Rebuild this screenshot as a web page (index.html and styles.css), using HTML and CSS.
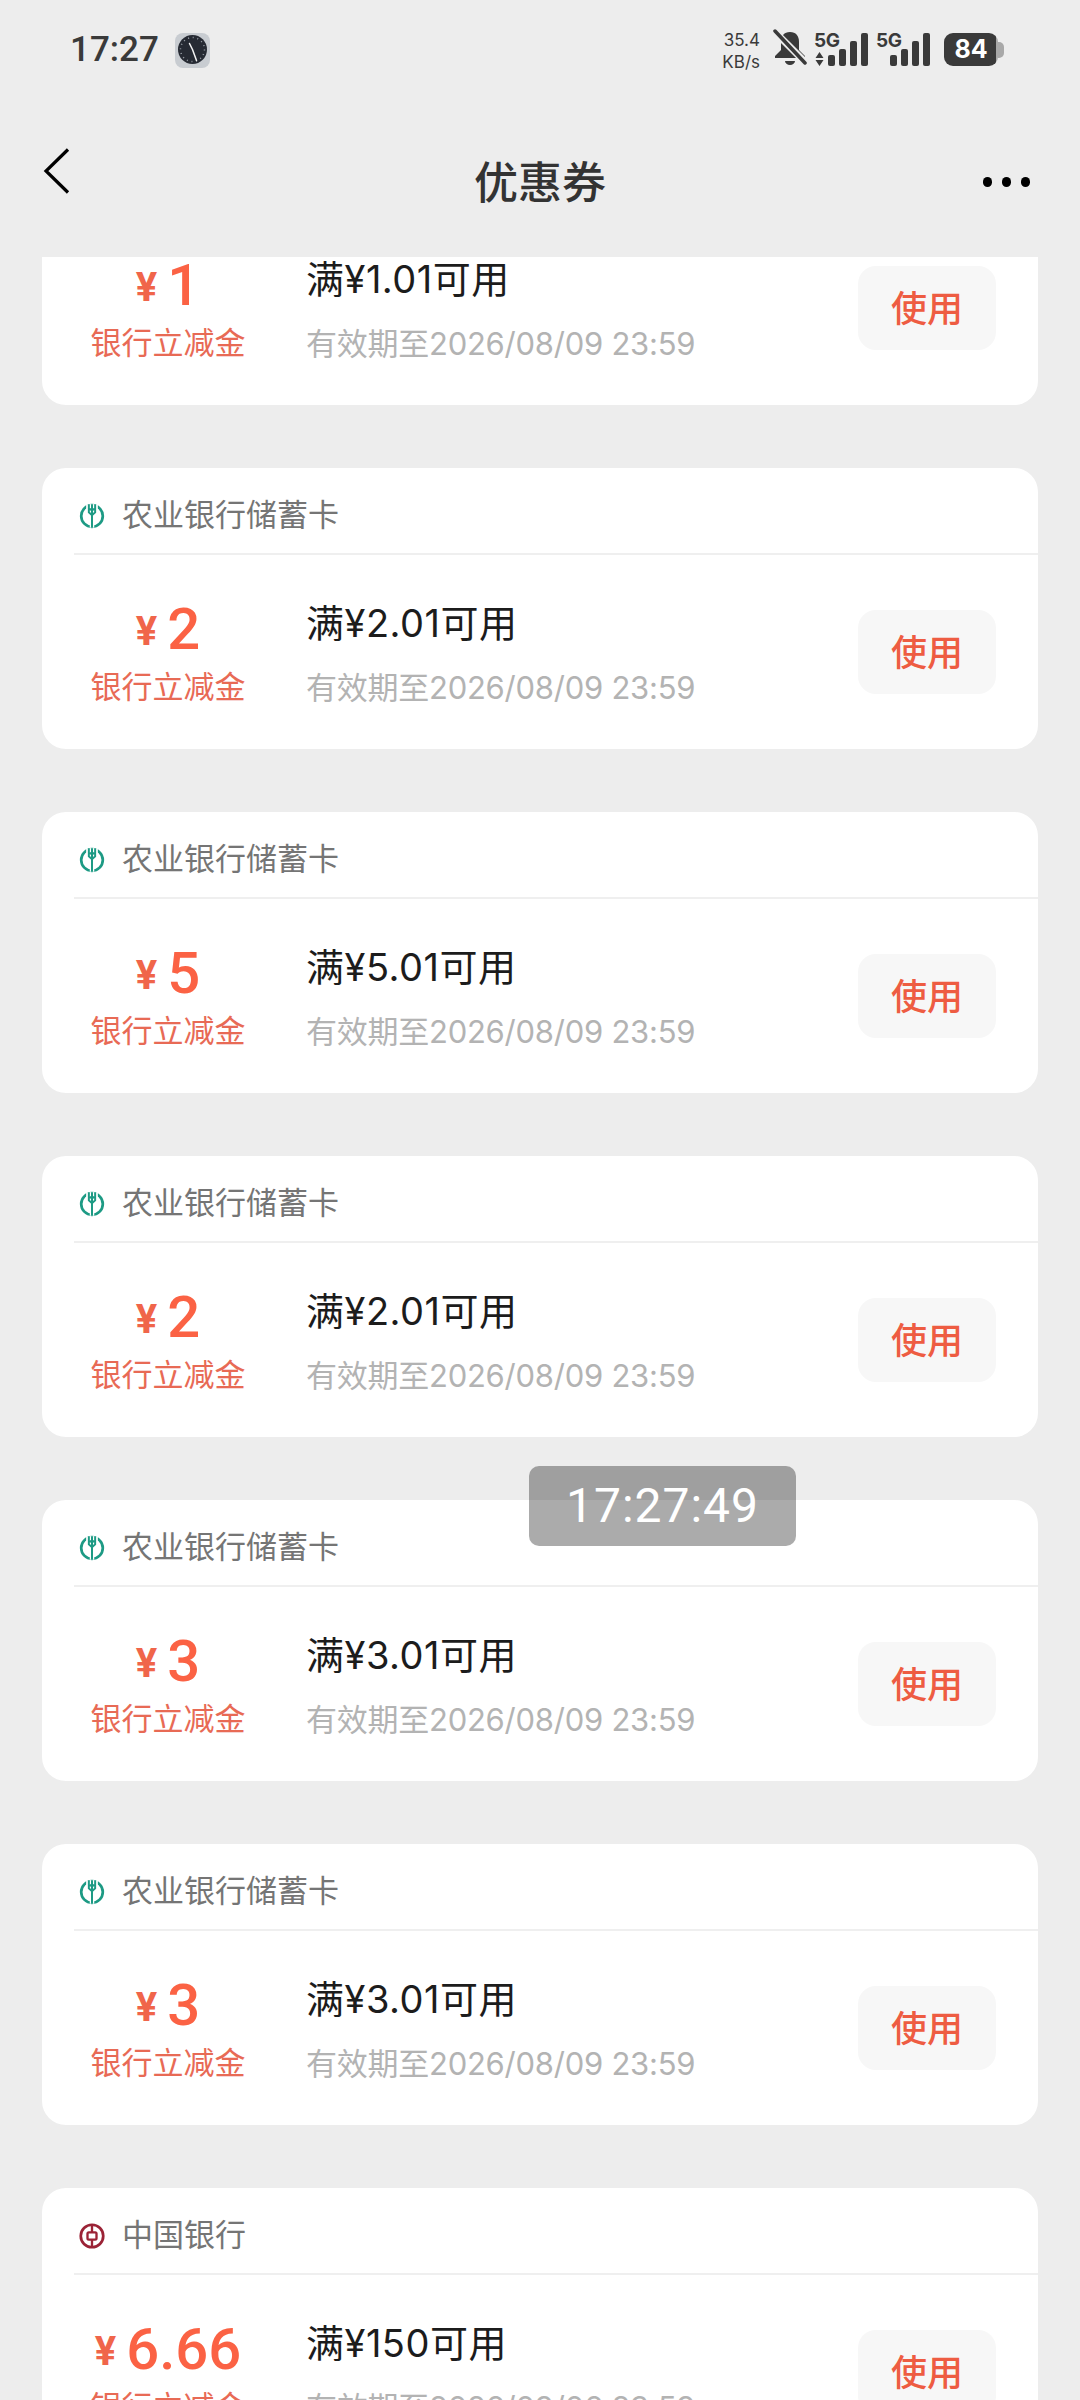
FILE: index.html
```html
<!DOCTYPE html>
<html lang="zh-CN">
<head>
    <meta charset="UTF-8">
    <meta name="viewport" content="width=device-width, initial-scale=1.0">
    <title>优惠券</title>
    <link rel="stylesheet" href="styles.css">
</head>
<body>
<svg class="defs" width="0" height="0">
    <symbol id="abc" viewBox="0 0 40 40">
        <circle cx="20" cy="20" r="19.500" fill="#fff"/>
        <circle cx="20" cy="20" r="12" fill="none" stroke="#1d9a84" stroke-width="3"/>
        <path d="M16 7v9l4 3.500 4-3.500V7" fill="none" stroke="#fff" stroke-width="5"/>
        <path d="M20 7v26" stroke="#fff" stroke-width="5"/>
        <path d="M16.500 7v9l3.500 3 3.500-3V7M20 7v26M17.500 12l2.500 2 2.500-2" fill="none" stroke="#1d9a84" stroke-width="2.200"/>
    </symbol>
    <symbol id="boc" viewBox="0 0 40 40">
        <circle cx="20" cy="20" r="19.500" fill="#fff"/>
        <circle cx="20" cy="20" r="12.500" fill="none" stroke="#9b2336" stroke-width="3"/>
        <rect x="15" y="16" width="10" height="8" rx="1.500" fill="none" stroke="#9b2336" stroke-width="2.600"/>
        <path d="M20 7v9M20 24v9" stroke="#9b2336" stroke-width="2.600"/>
    </symbol>
</svg>

<div class="phone">
    <div class="top">
        <div class="status">
            <div class="status-left">
                <span class="clock-text">17:27</span>
                <svg class="clock-icon" width="35" height="35" viewBox="0 0 35 35">
                    <rect width="35" height="35" rx="8" fill="#c8ccd1"/>
                    <circle cx="17.500" cy="16.500" r="14.500" fill="#262a33"/>
                    <circle cx="17.500" cy="16.500" r="12" fill="none" stroke="#9aa0a8" stroke-width="1.500" stroke-dasharray="1 3.700"/>
                    <path d="M17.500 16.500l4 11M17.500 16.500l-3-6" stroke="#f2f2f2" stroke-width="1.500" stroke-linecap="round"/>
                </svg>
            </div>
            <div class="status-right">
                <div class="netspeed"><span>35.4</span><span>KB/s</span></div>
                <svg class="bell" width="34" height="38" viewBox="0 0 34 38">
                    <path d="M17 3c-6 0-9 4-9 10v8l-6 6v2h30v-2l-6-6v-8c0-6-3-10-9-10zM12 32h10a5 4 0 0 1-10 0z" fill="#3a3a3a"/>
                    <path d="M1 2l32 32" stroke="#ededed" stroke-width="7"/>
                    <path d="M2 2l30 32" stroke="#3a3a3a" stroke-width="3.500" stroke-linecap="round"/>
                </svg>
                <div class="signal signal-first">
                    <div class="signal-left">
                        <span class="fiveg">5G</span>
                        <svg class="arrows" width="9" height="14" viewBox="0 0 9 14"><path d="M4.500 0l4 6H.5zM4.500 14l4-6H.5z" fill="#3a3a3a"/></svg>
                    </div>
                    <div class="bars">
                        <i class="bar bar1"></i><i class="bar bar2"></i><i class="bar bar3"></i><i class="bar bar4"></i>
                    </div>
                </div>
                <div class="signal signal-second">
                    <div class="signal-left">
                        <span class="fiveg">5G</span>
                    </div>
                    <div class="bars">
                        <i class="bar bar1"></i><i class="bar bar2"></i><i class="bar bar3"></i><i class="bar bar4"></i>
                    </div>
                </div>
                <div class="battery"><span class="battery-body">84</span><i class="battery-nub"></i></div>
            </div>
        </div>
        <div class="nav">
            <svg class="back" width="28" height="48" viewBox="0 0 28 48">
                <path d="M25 2.500L3 24l22 21.500" fill="none" stroke="#000" stroke-width="3.200"/>
            </svg>
            <div class="nav-title">优惠券</div>
            <div class="more"><i></i><i></i><i></i></div>
        </div>
    </div>

    <div class="list">
        <div class="card card-first">
            <div class="card-head">
                <svg class="bank-icon" viewBox="0 0 40 40"><use href="#abc"/></svg>
                <span class="bank-name">农业银行储蓄卡</span>
            </div>
            <div class="card-body">
                <div class="amount-col">
                    <div class="amount"><span class="yen">¥</span><span class="num">1</span></div>
                    <div class="amount-label">银行立减金</div>
                </div>
                <div class="info">
                    <div class="info-title">满¥1.01可用</div>
                    <div class="info-date">有效期至2026/08/09 23:59</div>
                </div>
                <div class="use-btn">使用</div>
            </div>
        </div>

        <div class="card">
            <div class="card-head">
                <svg class="bank-icon" viewBox="0 0 40 40"><use href="#abc"/></svg>
                <span class="bank-name">农业银行储蓄卡</span>
            </div>
            <div class="card-body">
                <div class="amount-col">
                    <div class="amount"><span class="yen">¥</span><span class="num">2</span></div>
                    <div class="amount-label">银行立减金</div>
                </div>
                <div class="info">
                    <div class="info-title">满¥2.01可用</div>
                    <div class="info-date">有效期至2026/08/09 23:59</div>
                </div>
                <div class="use-btn">使用</div>
            </div>
        </div>

        <div class="card">
            <div class="card-head">
                <svg class="bank-icon" viewBox="0 0 40 40"><use href="#abc"/></svg>
                <span class="bank-name">农业银行储蓄卡</span>
            </div>
            <div class="card-body">
                <div class="amount-col">
                    <div class="amount"><span class="yen">¥</span><span class="num">5</span></div>
                    <div class="amount-label">银行立减金</div>
                </div>
                <div class="info">
                    <div class="info-title">满¥5.01可用</div>
                    <div class="info-date">有效期至2026/08/09 23:59</div>
                </div>
                <div class="use-btn">使用</div>
            </div>
        </div>

        <div class="card">
            <div class="card-head">
                <svg class="bank-icon" viewBox="0 0 40 40"><use href="#abc"/></svg>
                <span class="bank-name">农业银行储蓄卡</span>
            </div>
            <div class="card-body">
                <div class="amount-col">
                    <div class="amount"><span class="yen">¥</span><span class="num">2</span></div>
                    <div class="amount-label">银行立减金</div>
                </div>
                <div class="info">
                    <div class="info-title">满¥2.01可用</div>
                    <div class="info-date">有效期至2026/08/09 23:59</div>
                </div>
                <div class="use-btn">使用</div>
            </div>
        </div>

        <div class="card">
            <div class="card-head">
                <svg class="bank-icon" viewBox="0 0 40 40"><use href="#abc"/></svg>
                <span class="bank-name">农业银行储蓄卡</span>
            </div>
            <div class="card-body">
                <div class="amount-col">
                    <div class="amount"><span class="yen">¥</span><span class="num">3</span></div>
                    <div class="amount-label">银行立减金</div>
                </div>
                <div class="info">
                    <div class="info-title">满¥3.01可用</div>
                    <div class="info-date">有效期至2026/08/09 23:59</div>
                </div>
                <div class="use-btn">使用</div>
            </div>
        </div>

        <div class="card">
            <div class="card-head">
                <svg class="bank-icon" viewBox="0 0 40 40"><use href="#abc"/></svg>
                <span class="bank-name">农业银行储蓄卡</span>
            </div>
            <div class="card-body">
                <div class="amount-col">
                    <div class="amount"><span class="yen">¥</span><span class="num">3</span></div>
                    <div class="amount-label">银行立减金</div>
                </div>
                <div class="info">
                    <div class="info-title">满¥3.01可用</div>
                    <div class="info-date">有效期至2026/08/09 23:59</div>
                </div>
                <div class="use-btn">使用</div>
            </div>
        </div>

        <div class="card">
            <div class="card-head">
                <svg class="bank-icon" viewBox="0 0 40 40"><use href="#boc"/></svg>
                <span class="bank-name">中国银行</span>
            </div>
            <div class="card-body">
                <div class="amount-col">
                    <div class="amount"><span class="yen">¥</span><span class="num">6.66</span></div>
                    <div class="amount-label">银行立减金</div>
                </div>
                <div class="info">
                    <div class="info-title">满¥150可用</div>
                    <div class="info-date">有效期至2026/09/06 23:59</div>
                </div>
                <div class="use-btn">使用</div>
            </div>
        </div>
    </div>

    <div class="time-toast">17:27:49</div>
</div>
</body>
</html>
```

FILE: styles.css
```css
* {
    box-sizing: border-box;
}
html, body {
    margin: 0;
    padding: 0;
}
body {
    font-family: Roboto, "Noto Sans CJK SC", sans-serif;
    background-color: #ededed;
}
.defs {
    position: absolute;
}
.phone {
    position: relative;
    width: 1080px;
    height: 2400px;
    overflow: hidden;
    display: flex;
    flex-direction: column;
}

/* status bar and title */
.top {
    height: 257px;
    flex-shrink: 0;
    background-color: #ededed;
}
.status {
    height: 100px;
    display: flex;
    justify-content: space-between;
    padding: 29px 76px 0 70px;
    color: #3a3a3a;
}
.status-left {
    display: flex;
    align-items: flex-start;
    gap: 15px;
}
.clock-text {
    width: 90px;
    font-size: 35px;
    font-weight: 500;
    line-height: 42px;
}
.clock-icon {
    margin-top: 4px;
}
.status-right {
    display: flex;
    align-items: flex-start;
}
.netspeed {
    display: flex;
    flex-direction: column;
    align-items: flex-end;
    width: 37px;
    font-size: 17px;
    line-height: 22px;
    font-family: Inter, sans-serif;
    margin-right: 13px;
    white-space: nowrap;
}
.bell {
    margin-right: 7px;
}
.signal {
    display: flex;
    height: 38px;
    margin-top: 2px;
}
.signal-left {
    display: flex;
    flex-direction: column;
}
.signal-first {
    width: 55px;
    margin-right: 7px;
}
.signal-second {
    width: 55px;
    margin-right: 13px;
}
.fiveg {
    font-family: Inter, sans-serif;
    font-size: 19px;
    font-weight: 700;
    line-height: 19px;
    width: 26px;
    letter-spacing: -0.5px;
}
.arrows {
    margin: 2px 0 0 1px;
}
.bars {
    display: flex;
    align-items: flex-end;
    gap: 4px;
    height: 33px;
    margin: 2px 0 0 -12px;
}
.bar {
    width: 7px;
    border-radius: 2px;
    background-color: #3a3a3a;
}
.bar1 { height: 11px; }
.bar2 { height: 17px; }
.bar3 { height: 25px; }
.bar4 { height: 33px; }
.battery {
    display: flex;
    align-items: center;
    margin-top: 4px;
}
.battery-body {
    width: 54px;
    height: 33px;
    border-radius: 9px;
    background: linear-gradient(90deg, #3a3a3a 52px, #a8a8a8 52px);
    color: #fff;
    font-family: Inter, sans-serif;
    font-size: 25px;
    font-weight: 700;
    line-height: 33px;
    text-align: center;
}
.battery-nub {
    width: 6px;
    height: 16px;
    border-radius: 0 5px 5px 0;
    background-color: #a8a8a8;
}
.nav {
    position: relative;
    height: 157px;
    display: flex;
    justify-content: space-between;
    padding: 0 50px 0 43px;
}
.back {
    margin-top: 47px;
}
.nav-title {
    position: absolute;
    left: 0;
    right: 0;
    top: 57px;
    text-align: center;
    font-size: 44px;
    font-weight: 500;
    line-height: 54px;
    color: #333;
}
.more {
    display: flex;
    gap: 9.500px;
    margin-top: 77px;
}
.more i {
    width: 9.500px;
    height: 9.500px;
    border-radius: 50%;
    background-color: #000;
}

/* coupon list */
.list {
    flex: 1;
    overflow: hidden;
    padding: 0 42px;
}
.card {
    height: 281px;
    margin-bottom: 63px;
    border-radius: 24px;
    background-color: #fff;
    overflow: hidden;
}
.card-first {
    margin-top: -133px;
}
.card-head {
    height: 87px;
    margin-left: 32px;
    display: flex;
    align-items: center;
    padding-top: 10px;
    border-bottom: 2px solid #efefef;
}
.bank-icon {
    width: 36px;
    height: 36px;
    margin-right: 12px;
}
.bank-name {
    font-size: 31px;
    line-height: 40px;
    color: #757575;
}
.card-body {
    height: 194px;
    display: flex;
    align-items: center;
    padding-right: 42px;
}
.amount-col {
    width: 252px;
    text-align: center;
    color: #f0654a;
}
.amount {
    height: 66px;
    line-height: 66px;
    white-space: nowrap;
}
.yen {
    font-size: 40px;
    font-weight: 700;
    margin-right: 10px;
    vertical-align: 4px;
}
.num {
    font-size: 58px;
    font-weight: 500;
    color: #fb6244;
}
.amount-label {
    margin-top: 6px;
    font-size: 31px;
    line-height: 40px;
    color: #e86a55;
}
.info {
    flex: 1;
    margin-left: 12px;
}
.info-title {
    height: 66px;
    padding-top: 3px;
    font-family: Inter, "Noto Sans CJK SC", sans-serif;
    font-size: 38px;
    letter-spacing: 0.5px;
    line-height: 48px;
    color: #1c1c1c;
}
.info-date {
    margin-top: 6px;
    font-family: Inter, "Noto Sans CJK SC", sans-serif;
    font-size: 31px;
    letter-spacing: -0.25px;
    line-height: 40px;
    color: #b3b3b3;
}
.use-btn {
    width: 138px;
    height: 84px;
    border-radius: 18px;
    background-color: #f7f7f7;
    color: #ee5c42;
    font-size: 36px;
    font-weight: 500;
    line-height: 88px;
    text-align: center;
}

/* floating timer */
.time-toast {
    position: absolute;
    left: 529px;
    top: 1466px;
    width: 267px;
    height: 80px;
    border-radius: 10px;
    background-color: rgba(0, 0, 0, 0.33);
    color: #fff;
    font-size: 48px;
    line-height: 80px;
    text-align: center;
    letter-spacing: 1px;
}
```
